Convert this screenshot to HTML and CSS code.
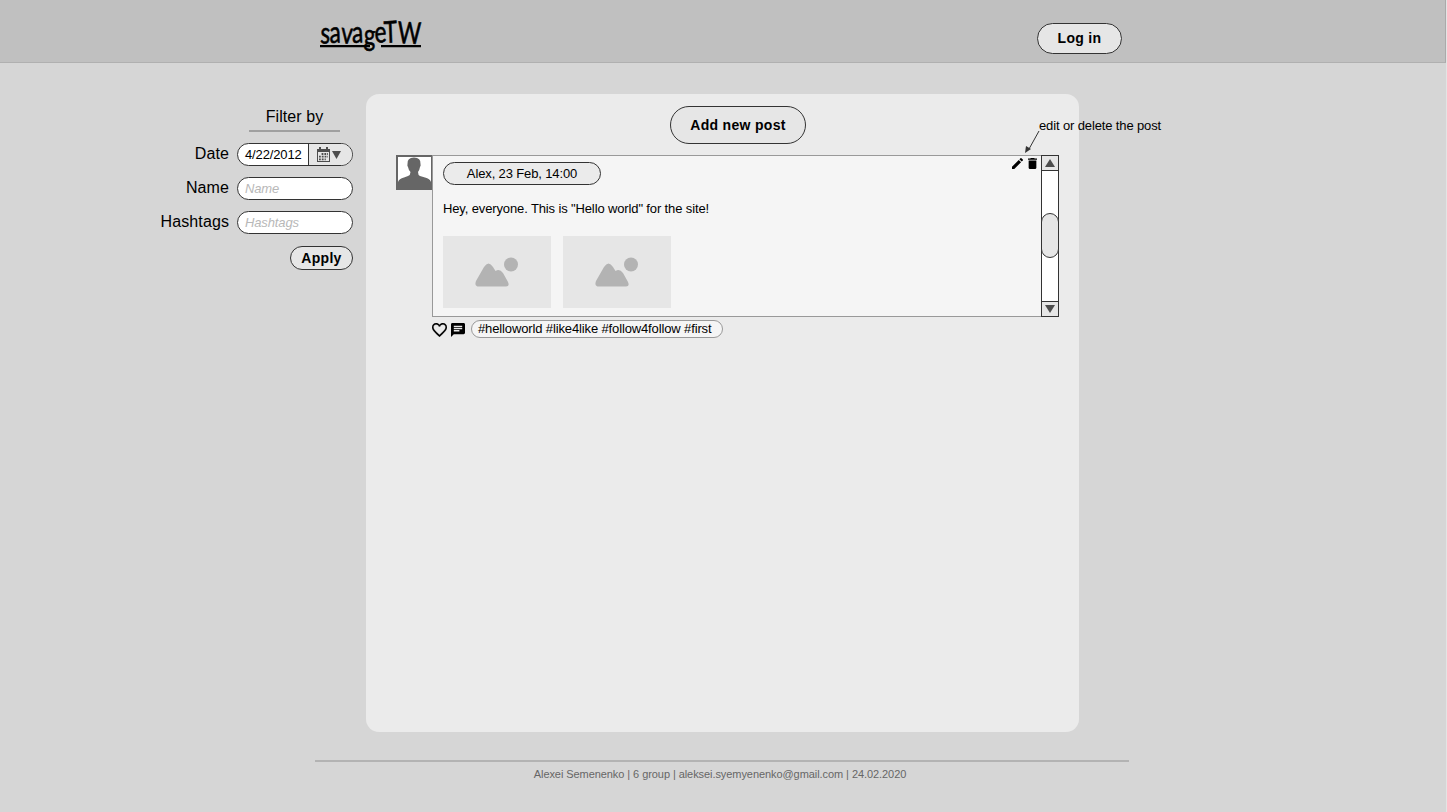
FILE: index.html
```html
<!DOCTYPE html>
<html lang="en">
<head>
<meta charset="utf-8">
<title>savageTW</title>
<link rel="stylesheet" href="styles.css">
</head>
<body>
<header class="header">
  <svg class="logo" width="110" height="44" viewBox="0 0 110 44" role="img" aria-label="savageTW">
    <text class="logo-text" x="2" y="30" dy="0 0 0 0 2 -2 0 0" font-size="30" textLength="101" lengthAdjust="spacingAndGlyphs" rotate="4 -2 4 -3 3 -4 -3 2">savageTW</text>
    <path class="logo-line" d="M2 33.200H52M63 33.200H103"/>
  </svg>
  <button class="btn login">Log in</button>
</header>
<div class="layout">
  <aside class="filter">
    <h2 class="filter-title">Filter by</h2>
    <div class="row"><label>Date</label>
      <div class="field date"><span class="date-value">4/22/2012</span>
        <span class="date-pick">
          <svg width="15" height="15" viewBox="0 0 15 15"><path fill="#4d4d4d" fill-rule="evenodd" d="M1 2H3V0H5V2H10V0H12V2H14V15H1ZM2 5V14H13V5Z"/><path stroke="#4d4d4d" stroke-width="1.8" stroke-dasharray="1.8 1" d="M5.6 7H12M3 9.7H12M3 12.4H9.8"/></svg>
          <svg width="9" height="8" viewBox="0 0 9 8"><path fill="#4d4d4d" d="M0 0H9L4.5 8Z"/></svg>
        </span>
      </div>
    </div>
    <div class="row"><label>Name</label><div class="field hint">Name</div></div>
    <div class="row"><label>Hashtags</label><div class="field hint">Hashtags</div></div>
    <button class="btn apply">Apply</button>
  </aside>
  <main class="feed">
    <button class="btn add">Add new post</button>
    <article class="post">
      <svg class="avatar" width="37" height="35" viewBox="0 0 37 35"><path fill="#fff" stroke="#666" stroke-width="2" d="M1 1H36V34H1Z"/><path fill="#666" d="M2 34V27Q3 23.500 8 22.500L12 21Q14.500 20 14.500 17Q12.500 15 12 12Q11 11 11.500 9Q11 2.500 18 2.500Q25 2.500 24.500 9Q25 11 24 12Q23.500 15 22 17Q22 20 24 21L29 22.500Q34 23.500 35 27V34Z"/></svg>
      <div class="body">
        <div class="content">
          <div class="author">Alex, 23 Feb, 14:00</div>
          <p class="message">Hey, everyone. This is "Hello world" for the site!</p>
          <div class="images">
            <div class="image"><svg width="44" height="31" viewBox="0 0 44 31"><circle cx="36" cy="7.500" r="7"/><path d="M1 24L9 10Q13.500 3 18 10L20.500 14Q24.500 11 28 16L33 25Q35 29.500 31 29.500H4Q-1 29.500 1 24Z"/></svg></div>
            <div class="image"><svg width="44" height="31" viewBox="0 0 44 31"><circle cx="36" cy="7.500" r="7"/><path d="M1 24L9 10Q13.500 3 18 10L20.500 14Q24.500 11 28 16L33 25Q35 29.500 31 29.500H4Q-1 29.500 1 24Z"/></svg></div>
          </div>
          <div class="tools">
            <svg width="11" height="11" viewBox="3 3 18 18"><path d="M3 17.250V21h3.750L17.810 9.940l-3.750-3.750L3 17.250zM20.710 7.040a1 1 0 0 0 0-1.410l-2.340-2.340a1 1 0 0 0-1.410 0l-1.830 1.830 3.750 3.750 1.830-1.830z"/></svg>
            <svg width="9" height="11" viewBox="5 3 14 18" preserveAspectRatio="none"><path d="M6 19c0 1.100.9 2 2 2h8c1.100 0 2-.9 2-2V7H6v12zM19 4h-3.500l-1-1h-5l-1 1H5v2h14V4z"/></svg>
          </div>
        </div>
        <div class="scroll">
          <div class="arrow up"><svg width="10" height="8" viewBox="0 0 10 8"><path fill="#4d4d4d" d="M0 8H10L5 0Z"/></svg></div>
          <div class="thumb"></div>
          <div class="arrow down"><svg width="10" height="8" viewBox="0 0 10 8"><path fill="#4d4d4d" d="M0 0H10L5 8Z"/></svg></div>
        </div>
      </div>
      <div class="meta">
        <svg class="heart" width="15" height="14" viewBox="2 3 20 18.350"><path d="M16.500 3c-1.740 0-3.410.81-4.500 2.090C10.910 3.810 9.240 3 7.500 3 4.420 3 2 5.420 2 8.500c0 3.780 3.400 6.860 8.550 11.540L12 21.350l1.450-1.320C18.600 15.360 22 12.280 22 8.500 22 5.420 19.580 3 16.500 3zm-4.400 15.550l-.1.100-.1-.1C7.140 14.240 4 11.390 4 8.500 4 6.500 5.500 5 7.500 5c1.540 0 3.040.99 3.570 2.360h1.870C13.460 5.990 14.960 5 16.500 5c2 0 3.500 1.500 3.500 3.500 0 2.890-3.140 5.740-7.900 10.050z" stroke="#000" stroke-width=".2"/></svg>
        <svg class="comment" width="14" height="14" viewBox="2 2 20 20"><path d="M20 2H4c-1.100 0-2 .9-2 2v18l4-4h14c1.100 0 2-.9 2-2V4c0-1.100-.9-2-2-2zM6 9h12v2H6V9zm8 5H6v-2h8v2zm4-6H6V6h12v2z"/></svg>
        <div class="tags">#helloworld #like4like #follow4follow #first</div>
      </div>
      <div class="note"><span>edit or delete the post</span>
        <svg width="16" height="24" viewBox="0 0 16 24"><path stroke="#333" d="M14 0L4 18"/><path d="M0 22L1 15L6 18Z" fill="#333"/></svg>
      </div>
    </article>
  </main>
</div>
<footer class="footer">Alexei Semenenko | 6 group | aleksei.syemyenenko@gmail.com | 24.02.2020</footer>
</body>
</html>
```

FILE: styles.css
```css
* { box-sizing: border-box; }
body {
  margin: 0;
  height: 812px;
  overflow: hidden;
  background: #d6d6d6;
  border-right: 1px solid #e4e4e4;
  font-family: "Liberation Sans", Arial, sans-serif;
  font-size: 13px;
  letter-spacing: -.13px;
  color: #000;
}
svg { display: block; flex: none; }
.header {
  display: flex;
  justify-content: space-between;
  height: 63px;
  padding: 13px 323px 0 318px;
  background: #c0c0c0;
  border-bottom: 1px solid #b0b0b0;
  border-right: 1px solid #aaa;
}
.logo-text {
  font-family: Lato, "Open Sans", sans-serif;
  letter-spacing: 0;
  stroke: #000;
  stroke-width: .6;
}
.logo-line { stroke: #000; stroke-width: 2.2; }
.btn {
  display: block;
  padding: 0 0 1px;
  border: 1px solid #333;
  border-radius: 20px;
  background: #e6e6e6;
  color: #000;
  font: bold 14px "Liberation Sans", Arial, sans-serif;
  letter-spacing: .3px;
}
.login { width: 85px; height: 31px; margin-top: 10px; }
.layout { display: flex; height: 669px; }
.filter {
  display: flex;
  flex-direction: column;
  align-items: flex-end;
  width: 366px;
  padding: 42px 13px 0 0;
}
.filter-title {
  width: 91px;
  height: 27px;
  margin: 0 13px 11px 0;
  border-bottom: 2px solid #a0a0a0;
  font-size: 16px;
  font-weight: normal;
  letter-spacing: .08px;
  line-height: 23px;
  text-align: center;
}
.row { display: flex; align-items: flex-start; height: 34px; gap: 8px; }
.row label { font-size: 16px; line-height: 22px; letter-spacing: .1px; }
.field {
  width: 116px;
  height: 23px;
  border: 1px solid #333;
  border-radius: 12px;
  background: #fff;
  overflow: hidden;
  line-height: 22px;
}
.hint { padding-left: 7px; color: #b8b8b8; font-style: italic; }
.date { display: flex; }
.date-value { width: 71px; padding-left: 7px; border-right: 1px solid #333; }
.date-pick {
  display: flex;
  flex: 1;
  align-items: center;
  padding-left: 7px;
  gap: 1px;
  background: #e6e6e6;
}
.apply { width: 63px; height: 24px; margin-top: 1px; }
.feed {
  width: 713px;
  height: 638px;
  margin-top: 31px;
  padding: 12px 20px 0 30px;
  border-radius: 13px;
  background: #ebebeb;
}
.add { width: 136px; height: 38px; margin: 0 0 11px 274px; padding: 0; }
.post {
  position: relative;
  display: grid;
  grid-template-columns: 36px 627px;
}
.body {
  display: flex;
  height: 162px;
}
.content {
  position: relative;
  flex: 1;
  padding: 6px 0 0 10px;
  border: solid #999;
  border-width: 1px 0 1px 1px;
  background: #f5f5f5;
}
.author {
  width: 158px;
  height: 23px;
  border: 1px solid #333;
  border-radius: 12px;
  background: #ebebeb;
  line-height: 21px;
  text-align: center;
}
.message { margin: 16px 0 19px; line-height: 16px; }
.images { display: flex; gap: 12px; }
.image {
  width: 108px;
  height: 72px;
  padding: 21px 0 0 32px;
  background: #e6e6e6;
  fill: #b3b3b3;
}
.tools {
  position: absolute;
  top: 2px;
  right: 4px;
  display: flex;
  gap: 5px;
}
.scroll {
  display: flex;
  flex-direction: column;
  justify-content: space-between;
  width: 18px;
  background: #fff;
  border: solid #333;
  border-width: 0 1px;
}
.arrow {
  display: flex;
  align-items: center;
  justify-content: center;
  height: 16px;
  border: solid #333;
  border-width: 1px 0;
  background: #e6e6e6;
}
.thumb {
  height: 45px;
  margin: 0 -1px 1px;
  border: 1px solid #333;
  border-radius: 9px;
  background: #e6e6e6;
}
.meta {
  grid-column: 2;
  display: flex;
  align-items: center;
  height: 18px;
  margin-top: 3px;
}
.heart { margin-top: 2px; }
.comment { margin: 1px 6px 0 4px; }
.tags {
  width: 252px;
  height: 18px;
  padding-left: 6px;
  border: 1px solid #999;
  border-radius: 9px;
  background: #f5f5f5;
  line-height: 16px;
}
.note {
  position: absolute;
  left: 629px;
  top: -37px;
  white-space: nowrap;
}
.note span { display: block; padding-left: 14px; line-height: 15px; }
.note svg { margin-top: -2px; }
.footer {
  width: 814px;
  margin: 28px 0 0 315px;
  padding: 5px 4px 0 0;
  border-top: 2px solid #b3b3b3;
  color: #666;
  font-size: 11px;
  letter-spacing: -.07px;
  line-height: 14px;
  text-align: center;
}
```
